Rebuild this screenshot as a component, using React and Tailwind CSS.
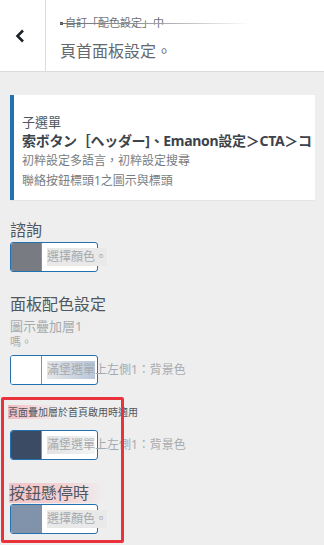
import React from "react";

const FONT = { fontFamily: '"Noto Sans", "Noto Sans CJK TC", sans-serif' };

const ColorButton = ({ swatch, label, labelClass = "" }) => (
  <div className="flex items-center h-[30px] w-[88px] border border-[#2271b1] rounded-[3px] bg-white overflow-visible">
    <div className={`h-full w-[31px] shrink-0 rounded-l-[2px] border-r border-[#8c8f94] ${swatch}`}></div>
    <span className={`ml-[5px] whitespace-nowrap text-[12px] leading-[18px] text-[#a7aaad] ${labelClass}`}>
      {label}
    </span>
  </div>
);

export default function App() {
  return (
    <div className="relative w-[324px] h-[545px] overflow-hidden bg-[#eeeeee]" style={FONT}>
      {/* Header */}
      <div className="flex h-[72px] bg-white border-b border-[#dcdcde]">
        <div className="w-[46px] shrink-0 border-r border-[#dcdcde] flex items-center justify-center">
          <svg width="10" height="14" viewBox="0 0 10 14" className="ml-[-5px]">
            <path d="M8 1.5 L2.5 7 L8 12.5" fill="none" stroke="#1d2327" strokeWidth="2.6" />
          </svg>
        </div>
        <div className="pl-[14px] pt-[15px]">
          <div className="relative text-[11px] leading-[16px] text-[#6c7075] pl-[5px]">
            <span className="absolute left-0 top-[7px] w-[3px] h-[3px] bg-[#50575e]"></span>
            自訂「配色設定」中
            <span className="absolute left-0 top-[8px] h-[1px] w-[190px] bg-gradient-to-r from-[#6c7075] via-[#9ea1a5] to-transparent"></span>
          </div>
          <div className="mt-[10px] text-[16px] leading-[20px] text-[#646970]">頁首面板設定。</div>
        </div>
      </div>

      {/* Body */}
      <div className="px-[10px]">
        <div className="mt-[23px] h-[105px] w-[305px] bg-white border-l-[4px] border-[#2271b1] pl-[8px] pt-[18px] shadow-[0_1px_1px_rgba(0,0,0,0.04)]">
          <div className="text-[13px] leading-[18px] text-[#50575e]">子選單</div>
          <div className="text-[14px] leading-[20px] font-bold tracking-[-0.3px] text-[#3c434a] whitespace-nowrap">
            索ボタン［ヘッダー]、Emanon設定＞CTA＞コ
          </div>
          <div className="text-[12px] leading-[20px] text-[#787c82]">初粹設定多語言，初粹設定搜尋</div>
          <div className="text-[12px] leading-[20px] text-[#787c82]">聯絡按鈕標頭1之圖示與標頭</div>
        </div>

        <div className="mt-[20px] text-[16px] leading-[20px] text-[#50575e]">諮詢</div>
        <div className="mt-[2px]">
          <ColorButton swatch="bg-[#787c82]" label="選擇顏色。" labelClass="bg-[#e9e9e9]" />
        </div>

        <div className="mt-[22px] text-[16px] leading-[20px] text-[#50575e]">面板配色設定</div>
        <div className="mt-[3px] text-[13px] leading-[18px] text-[#a7aaad]">圖示疊加層1</div>
        <div className="text-[11px] leading-[14px] text-[#a7aaad]">嗎。</div>
        <div className="mt-[6px]">
          <ColorButton
            swatch="bg-white"
            label="滿堡選單上左側1：背景色"
            labelClass="text-[11px] bg-[linear-gradient(to_right,#e4e6e8_0px,#c9d3df_30px,#b6c6da_48px,transparent_48px)]"
          />
        </div>

        <div className="mt-[20px] -ml-[2px] text-[10px] leading-[14px] text-[#50575e] w-fit bg-[linear-gradient(to_right,#f0b8bd,#f4dadc_22%,transparent_38%)]">
          頁面疊加層於首頁啟用時適用
        </div>
        <div className="mt-[11px]">
          <ColorButton
            swatch="bg-[#3a4b63]"
            label="滿堡選單上左側1：背景色"
            labelClass="text-[11px] bg-[linear-gradient(to_right,#e2e2e2_0px,#f3f4f5_48px,transparent_48px)]"
          />
        </div>

        <div className="mt-[23px] -ml-[1px] w-[96px] text-[16px] leading-[20px] text-[#50575e] bg-[linear-gradient(to_right,#f1c4c8,#f3d4d7_60%,transparent)]">
          按鈕懸停時
        </div>
        <div className="mt-[1px]">
          <ColorButton swatch="bg-[#8093aa]" label="選擇顏色。" labelClass="bg-[#e9e9e9]" />
        </div>
      </div>

      {/* Annotation box */}
      <div className="absolute left-[1px] top-[397px] w-[123px] h-[146px] border-[3px] border-[#e8333c] rounded-[2px] pointer-events-none"></div>
    </div>
  );
}
